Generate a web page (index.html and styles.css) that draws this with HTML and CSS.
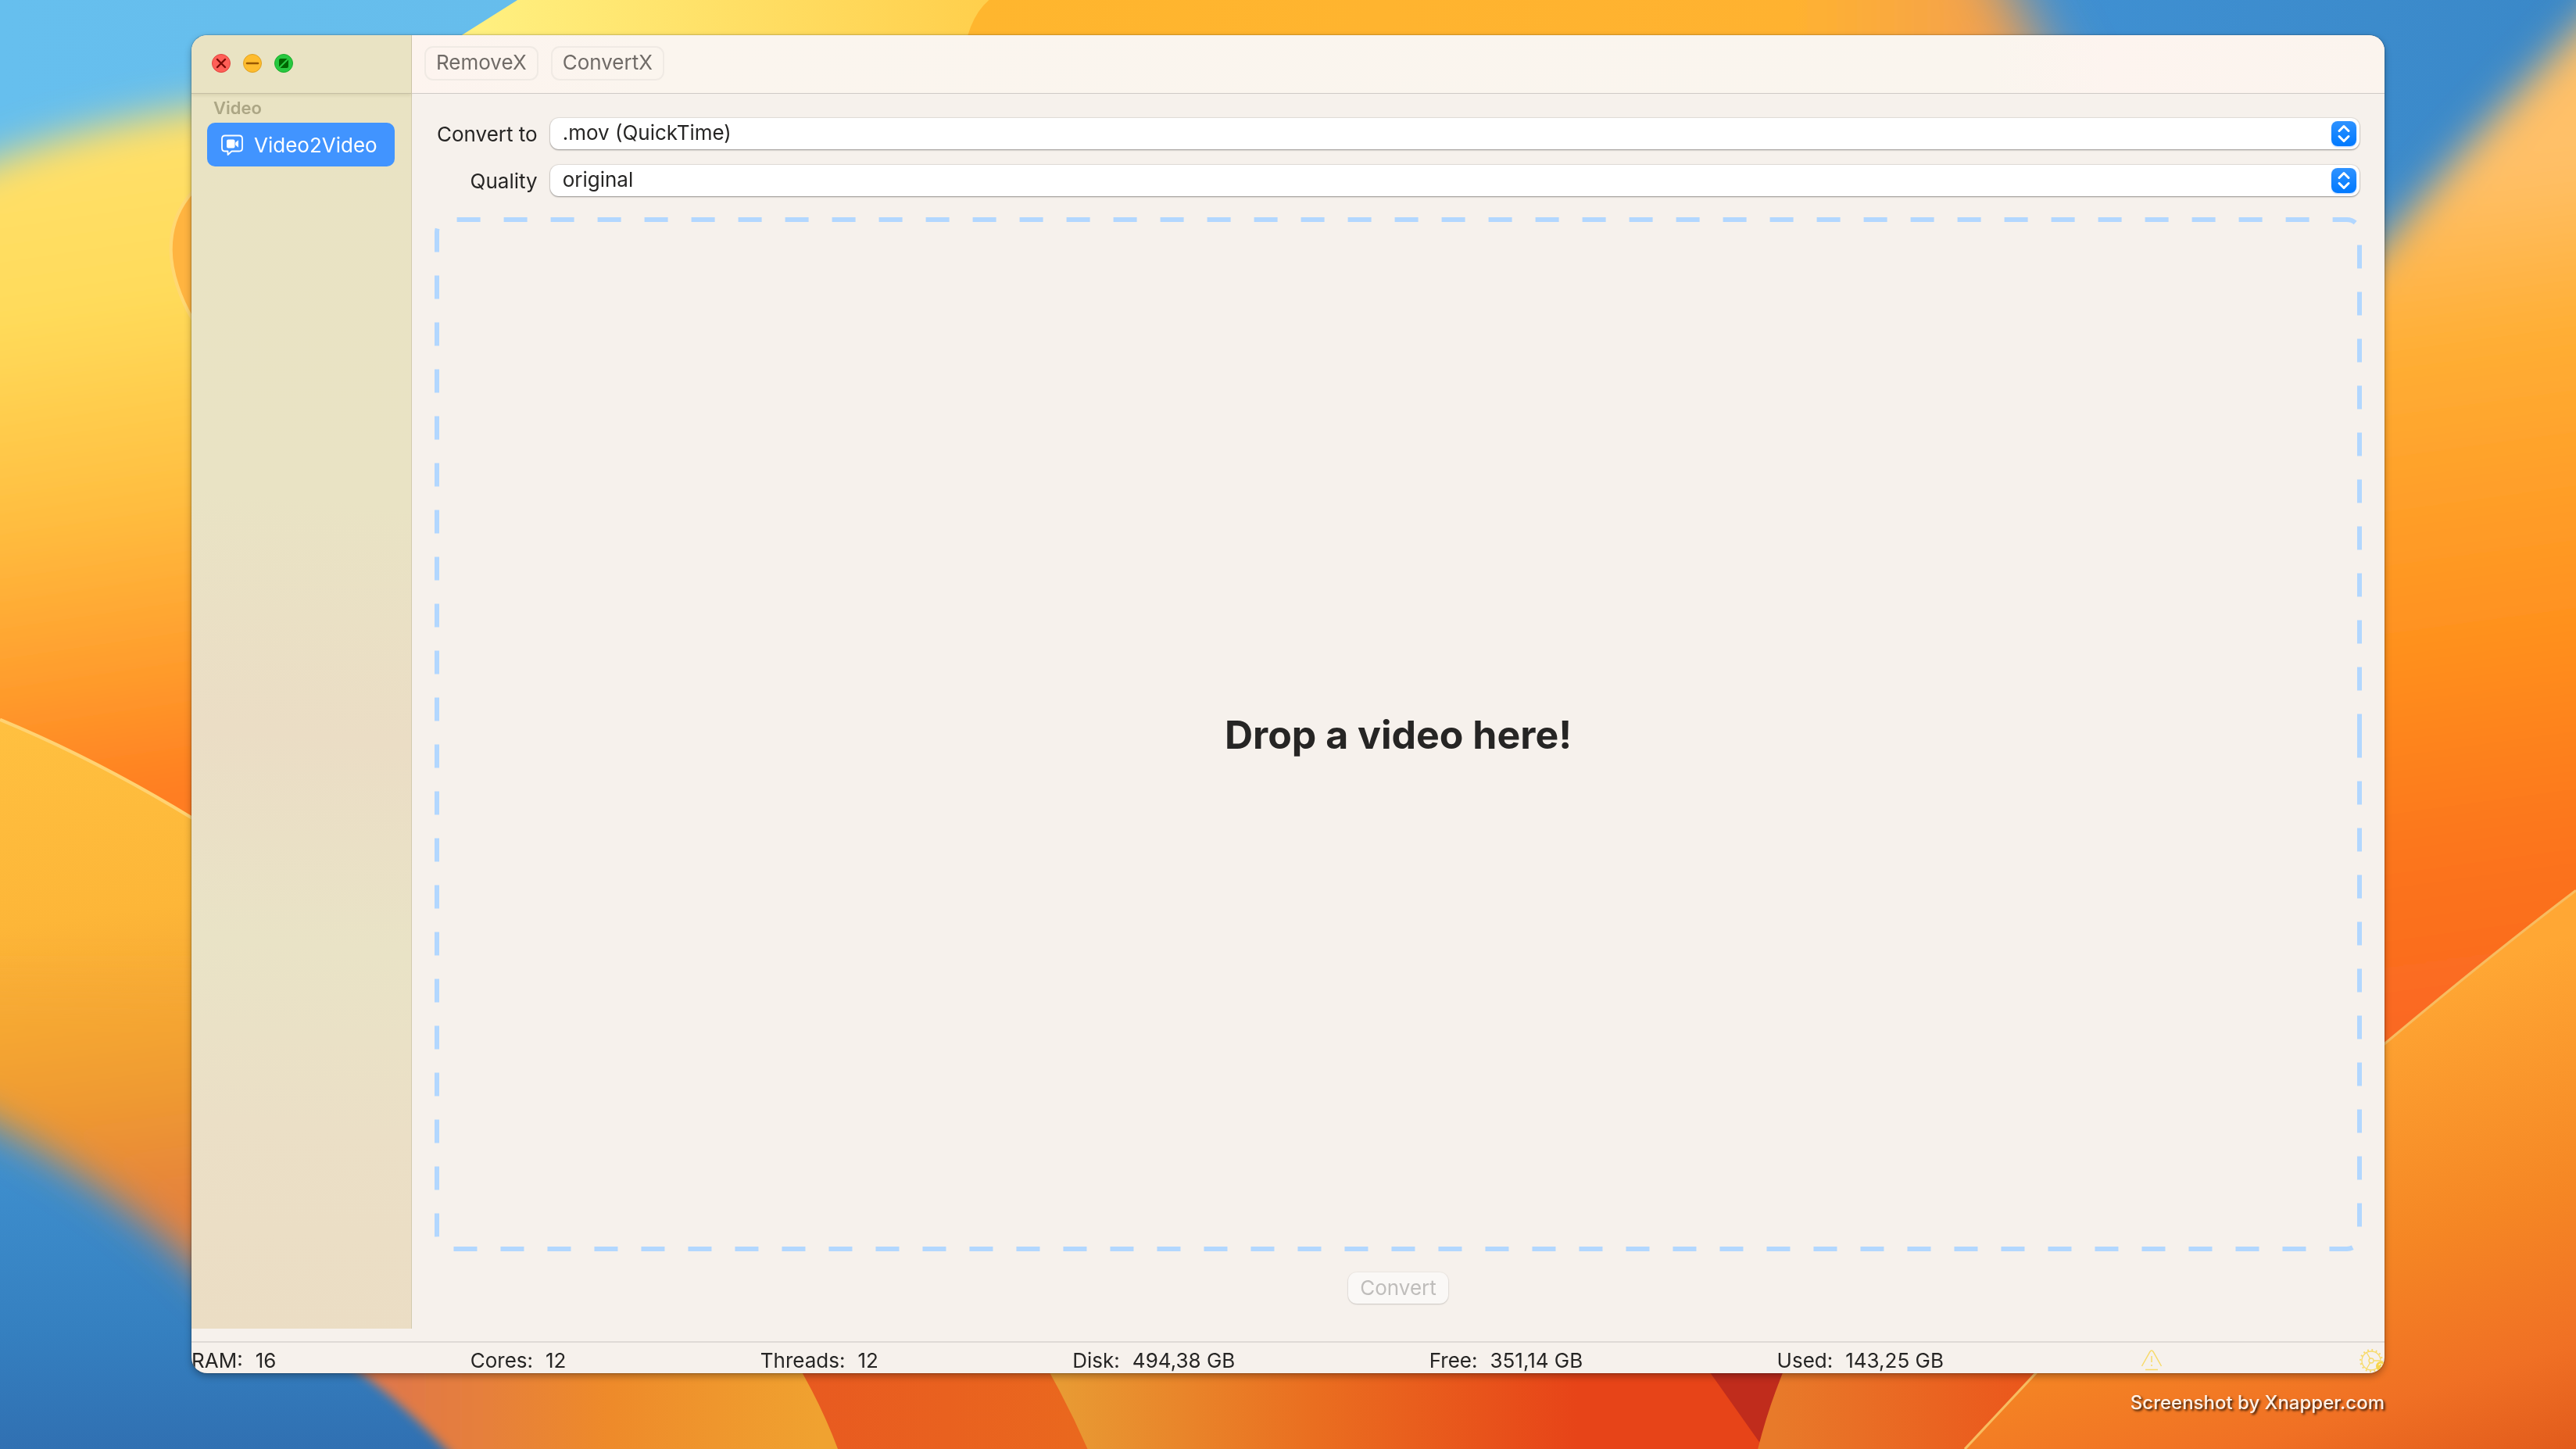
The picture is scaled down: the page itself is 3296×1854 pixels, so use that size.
FILE: index.html
```html
<!DOCTYPE html>
<html lang="en">
<head>
<meta charset="utf-8">
<meta name="viewport" content="width=device-width, initial-scale=1">
<title>Video2Video</title>
<link rel="stylesheet" href="styles.css">
</head>
<body>
<svg class="wallpaper" viewBox="0 0 1568 882" preserveAspectRatio="xMidYMid slice" aria-hidden="true">
  <defs>
    <filter id="soft" x="-20%" y="-20%" width="140%" height="140%"><feGaussianBlur stdDeviation="12"/></filter>
    <filter id="softer" x="-20%" y="-40%" width="140%" height="180%"><feGaussianBlur stdDeviation="18"/></filter>
    <filter id="edge" x="-20%" y="-20%" width="140%" height="140%"><feGaussianBlur stdDeviation="3"/></filter>
    <linearGradient id="sky" x1="0" y1="0" x2="1" y2="0"><stop offset="0" stop-color="#66bfee"/><stop offset=".2" stop-color="#66bdec"/><stop offset=".8" stop-color="#3f90d2"/><stop offset="1" stop-color="#3a88c8"/></linearGradient>
    <linearGradient id="yellow" gradientUnits="userSpaceOnUse" x1="20" y1="90" x2="80" y2="490"><stop offset="0" stop-color="#ffe06a"/><stop offset=".25" stop-color="#ffdb5a"/><stop offset=".55" stop-color="#ffbe40"/><stop offset=".8" stop-color="#ff9c2c"/><stop offset="1" stop-color="#ff7c20"/></linearGradient>
    <linearGradient id="amber" gradientUnits="userSpaceOnUse" x1="20" y1="440" x2="60" y2="740"><stop offset="0" stop-color="#ffc040"/><stop offset=".4" stop-color="#fdb638"/><stop offset=".75" stop-color="#f09c30"/><stop offset="1" stop-color="#e5823c"/></linearGradient>
    <linearGradient id="deep" gradientUnits="userSpaceOnUse" x1="0" y1="700" x2="0" y2="882"><stop offset="0" stop-color="#3f90cf"/><stop offset=".6" stop-color="#3580c0"/><stop offset="1" stop-color="#3070b2"/></linearGradient>
    <linearGradient id="top" gradientUnits="userSpaceOnUse" x1="290" y1="0" x2="600" y2="0"><stop offset="0" stop-color="#fff080"/><stop offset="1" stop-color="#ffcf4c"/></linearGradient>
    <linearGradient id="topRight" gradientUnits="userSpaceOnUse" x1="590" y1="0" x2="1260" y2="0"><stop offset="0" stop-color="#ffb62e"/><stop offset=".75" stop-color="#ffb230"/><stop offset="1" stop-color="#f09a58"/></linearGradient>
    <linearGradient id="right" gradientUnits="userSpaceOnUse" x1="1470" y1="110" x2="1540" y2="620"><stop offset="0" stop-color="#ffc068"/><stop offset=".2" stop-color="#ffae34"/><stop offset=".55" stop-color="#ff901e"/><stop offset=".8" stop-color="#fc741c"/><stop offset="1" stop-color="#fa6822"/></linearGradient>
    <linearGradient id="rightLow" gradientUnits="userSpaceOnUse" x1="1470" y1="600" x2="1560" y2="882"><stop offset="0" stop-color="#ffa734"/><stop offset=".5" stop-color="#f58624"/><stop offset=".8" stop-color="#f07024"/><stop offset="1" stop-color="#e25c1c"/></linearGradient>
    <linearGradient id="b1" gradientUnits="userSpaceOnUse" x1="240" y1="0" x2="500" y2="0"><stop offset="0" stop-color="#e07848"/><stop offset=".5" stop-color="#ee8a2a"/><stop offset="1" stop-color="#f0a230"/></linearGradient>
    <linearGradient id="b2" gradientUnits="userSpaceOnUse" x1="490" y1="0" x2="660" y2="0"><stop offset="0" stop-color="#e85a20"/><stop offset="1" stop-color="#ea681e"/></linearGradient>
    <linearGradient id="b3" gradientUnits="userSpaceOnUse" x1="640" y1="0" x2="960" y2="0"><stop offset="0" stop-color="#e89c34"/><stop offset=".5" stop-color="#ea6e20"/><stop offset="1" stop-color="#e74418"/></linearGradient>
    <linearGradient id="b4" gradientUnits="userSpaceOnUse" x1="1080" y1="0" x2="1230" y2="0"><stop offset="0" stop-color="#e87a2a"/><stop offset="1" stop-color="#eb581c"/></linearGradient>
  </defs>
  <rect width="1568" height="882" fill="url(#sky)"/>
  <path d="M-60 126Q20 76 160 60L360 300 360 640-60 640Z" fill="url(#yellow)" filter="url(#soft)"/>
  <path d="M315 0H1000V60H220Z" fill="url(#top)"/>
  <path d="M700-80V80H1268L1186-80Z" fill="url(#topRight)" filter="url(#softer)"/>
  <path d="M602 0Q588 12 586 40H1100V0Z" fill="url(#topRight)"/>
  <path d="M117 117C108 127 104 138 104 152C104 166 110 182 117 194H200V117Z" fill="#ffb440" stroke="#ffd873" stroke-width="2"/>
  <rect y="600" width="300" height="300" fill="url(#deep)"/>
  <path d="M0 438Q58 462 117 498L160 525V730L0 650Z" fill="url(#amber)"/>
  <path d="M-40 600V666Q60 712 130 782L220 870H300V600Z" fill="url(#amber)" filter="url(#soft)"/>
  <path d="M0 438Q58 462 117 498" fill="none" stroke="#ffd272" stroke-width="2"/>
  <rect y="834" width="320" height="50" fill="url(#deep)"/>
  <path d="M196 820Q240 846 288 900H520L484 820Z" fill="url(#b1)" filter="url(#edge)"/>
  <path d="M300 820H480Q500 850 510 882H300Z" fill="url(#b1)"/>
  <path d="M479 820Q498 850 510 882H680V820Z" fill="url(#b2)"/>
  <path d="M630 820Q648 850 662 882H1100V820Z" fill="url(#b3)"/>
  <path d="M1030 820L1071 878 1092 820Z" fill="#c02c1c"/>
  <path d="M1092 820Q1078 850 1070 882H1260V820Z" fill="url(#b4)"/>
  <path d="M1440 162Q1500 86 1610-24V900H1400V190Z" fill="url(#right)" filter="url(#soft)"/>
  <path d="M1254 820Q1224 852 1196 882H1568V542Q1510 586 1440 645Z" fill="url(#rightLow)"/>
  <path d="M1568 542Q1510 586 1440 645M1254 820Q1224 852 1196 882" fill="none" stroke="#f8bc60" stroke-width="1.5"/>
</svg>

<div class="window">
  <div class="panes">
    <aside class="sidebar">
      <div class="titlebar">
        <button class="light" type="button" aria-label="Close"><svg viewBox="0 0 24 24"><circle cx="12" cy="12" r="11.5" fill="#ff5f57" stroke="#e0443e"/><path d="M7 7l10 10M17 7L7 17" stroke="#7b0a05" stroke-width="2.4" stroke-linecap="round"/></svg></button>
        <button class="light" type="button" aria-label="Minimize"><svg viewBox="0 0 24 24"><circle cx="12" cy="12" r="11.5" fill="#febc2e" stroke="#dea123"/><path d="M5 12h14" stroke="#985700" stroke-width="2.6" stroke-linecap="round"/></svg></button>
        <button class="light" type="button" aria-label="Zoom"><svg viewBox="0 0 24 24"><circle cx="12" cy="12" r="11.5" fill="#28c840" stroke="#1dad2b"/><path d="M6 16.500V8q0-2 2-2h8.500zM18 7.500V16q0 2-2 2H7.500z" fill="#006500"/></svg></button>
      </div>
      <nav class="nav" aria-labelledby="nav-title">
        <h2 class="nav-title" id="nav-title">Video</h2>
        <a class="nav-item" href="#video2video" aria-current="page">
          <svg class="nav-icon" viewBox="0 0 28 28"><path d="M5 1.500H23Q27 1.500 27 5.500V17.500Q27 21.500 23 21.500H13.500L8.500 26V21.500H5Q1 21.500 1 17.500V5.500Q1 1.500 5 1.500Z" fill="none" stroke="#fff" stroke-width="1.800" stroke-linejoin="round"/><rect x="7" y="6.500" width="10.500" height="11" rx="2" fill="#fff"/><path d="M18.500 10.500L21.700 7.800V16.200L18.500 13.500Z" fill="#fff" stroke="#fff" stroke-width=".6" stroke-linejoin="round"/></svg>
          Video2Video
        </a>
      </nav>
    </aside>
    <main class="main">
      <header class="toolbar">
        <button class="tool" type="button">RemoveX</button>
        <button class="tool" type="button">ConvertX</button>
      </header>
      <form class="converter">
        <div class="fields">
          <label for="format">Convert to</label>
          <div class="picker">
            <select id="format"><option>.mov (QuickTime)</option></select>
            <svg class="stepper" viewBox="0 0 32 32" aria-hidden="true"><path d="M10 12.500l6-6 6 6M10 19.500l6 6 6-6"/></svg>
          </div>
          <label for="quality">Quality</label>
          <div class="picker">
            <select id="quality"><option>original</option></select>
            <svg class="stepper" viewBox="0 0 32 32" aria-hidden="true"><path d="M10 12.500l6-6 6 6M10 19.500l6 6 6-6"/></svg>
          </div>
        </div>
        <div class="dropzone">
          <svg class="outline" aria-hidden="true"><path/></svg>
          <p class="prompt">Drop a video here!</p>
        </div>
        <button class="convert" type="submit" disabled>Convert</button>
      </form>
    </main>
  </div>
  <footer class="status">
    <dl class="stats">
      <div><dt>RAM:</dt><dd>16</dd></div>
      <div><dt>Cores:</dt><dd>12</dd></div>
      <div><dt>Threads:</dt><dd>12</dd></div>
      <div><dt>Disk:</dt><dd>494,38 GB</dd></div>
      <div><dt>Free:</dt><dd>351,14 GB</dd></div>
      <div><dt>Used:</dt><dd>143,25 GB</dd></div>
    </dl>
    <svg class="warning" viewBox="0 0 32 32" role="img" aria-label="Warning"><path d="M3.500 23L14 4.500Q16 1.500 18 4.500L28.500 23M16 10v8M16 21v2M8 27.500h16" fill="none" stroke="#f7da6a" stroke-width="1.500"/></svg>
    <svg class="gear" viewBox="0 0 32 32" role="img" aria-label="Settings help">
      <circle cx="15" cy="16" r="13.700" fill="none" stroke="#f7da6a" stroke-width="2.400" stroke-dasharray="1.800 3.580"/>
      <circle cx="15" cy="16" r="12" fill="none" stroke="#f7da6a" stroke-width="1.300"/>
      <path d="M13.500 13.200L9 5.500M13.500 18.800L9 26.500M18.200 16H27" stroke="#f7da6a" stroke-width="1.300"/>
      <circle cx="15" cy="16" r="3" fill="none" stroke="#f7da6a" stroke-width="1.300"/>
      <circle cx="27" cy="23" r="6" fill="#f7d54c"/>
      <path d="M25 22q0-2 2-2t2 1.800q0 1-2 2.200M27 25.500v1" fill="none" stroke="#f6f1ec" stroke-width="1.200"/>
    </svg>
  </footer>
</div>
<p class="credit">Screenshot by Xnapper.com</p>
<script src="outline.js"></script>
</body>
</html>
```
FILE: outline.js
```js
// The dash pattern starts half-way down the right side and runs clockwise.
const zone = document.querySelector('.dropzone');
const path = zone.querySelector('path');
const inset = 3;
const r = 16;

function drawOutline() {
  const right = zone.clientWidth - inset;
  const bottom = zone.clientHeight - inset;
  const middle = zone.clientHeight / 2;
  path.setAttribute('d',
    `M${right} ${middle}V${bottom - r}A${r} ${r} 0 0 1 ${right - r} ${bottom}` +
    `H${inset + r}A${r} ${r} 0 0 1 ${inset} ${bottom - r}` +
    `V${inset + r}A${r} ${r} 0 0 1 ${inset + r} ${inset}` +
    `H${right - r}A${r} ${r} 0 0 1 ${right} ${inset + r}V${middle}`);
}

drawOutline();
new ResizeObserver(drawOutline).observe(zone);
```
FILE: styles.css
```css
* {
  box-sizing: border-box;
}

body {
  display: flex;
  flex-direction: column;
  min-height: 100vh;
  margin: 0;
  padding: 45px 245px 0;
  color: #262524;
  font: 26px/32px Inter, "Liberation Sans", sans-serif;
}

button,
select {
  color: inherit;
  font: inherit;
}

h2,
p,
dl,
dd {
  margin: 0;
}

.wallpaper {
  position: fixed;
  inset: 0;
  z-index: -1;
  width: 100%;
  height: 100%;
}

.window {
  display: flex;
  flex: 1;
  flex-direction: column;
  overflow: hidden;
  border-radius: 20px;
  background: #f6f1ec;
  box-shadow: 0 0 2px rgba(0, 0, 0, .5), 0 4px 10px rgba(0, 0, 0, .3);
}

.panes {
  display: flex;
  flex: 1;
}

.sidebar {
  flex: none;
  width: 282px;
  margin-bottom: 16px;
  border-right: 1px solid #d3cbae;
  background: linear-gradient(185deg, #e9e3c3 0%, #e9e3c4 36%, #ebddc5 54%, #e9e3c6 70%, #ebdfc6 84%, #ebddc4 100%);
}

.titlebar {
  display: flex;
  align-items: center;
  gap: 16px;
  height: 75px;
  padding: 0 26px 2px;
  border-bottom: 1px solid #c5bfa4;
  box-shadow: 0 2px 4px rgba(90, 80, 40, .12);
}

.light {
  width: 24px;
  height: 24px;
  padding: 0;
  border: 0;
  background: none;
}

.light svg {
  display: block;
}

.nav {
  padding: 4px 21px 4px 20px;
}

.nav-title {
  padding: 0 8px;
  color: #aca685;
  font-size: 22px;
  font-weight: 600;
  line-height: 28px;
}

.nav-item {
  display: flex;
  align-items: center;
  gap: 14px;
  height: 56px;
  margin-top: 5px;
  padding: 2px 18px 0;
  border-radius: 10px;
  background: #4194ff;
  color: #fff;
  text-decoration: none;
}

.nav-icon {
  flex: none;
  width: 28px;
  height: 28px;
}

.main {
  display: flex;
  flex: 1;
  flex-direction: column;
}

.toolbar {
  display: flex;
  align-items: flex-start;
  gap: 16px;
  height: 75px;
  padding: 14px 16px 0;
  border-bottom: 1px solid #cfcac6;
  background: linear-gradient(90deg, #fdf4ef, #fbf5ee 12%, #faf5ee 80%, #fdf4ef 86%, #fbf4ee);
}

.tool {
  height: 44px;
  padding: 0 13px 2px;
  border: 2px solid #f0eae4;
  border-radius: 11px;
  background: none;
  color: #706b67;
}

.converter {
  display: flex;
  flex: 1;
  flex-direction: column;
  align-items: center;
  gap: 27px;
  padding: 31px 29px 48px;
}

.fields {
  display: grid;
  grid-template-columns: auto 1fr;
  align-self: stretch;
  align-items: center;
  gap: 20px 16px;
  padding: 0 3px;
}

.fields label {
  padding-top: 2px;
  text-align: right;
}

.picker {
  display: flex;
  position: relative;
}

.picker select {
  flex: 1;
  height: 40px;
  padding: 0 16px 2px;
  border: 0;
  border-radius: 11px;
  appearance: none;
  background: #fff;
  box-shadow: 0 0 1px 1px rgba(0, 0, 0, .08), 0 1px 2px rgba(0, 0, 0, .35);
}

.stepper {
  position: absolute;
  top: 4px;
  right: 4px;
  width: 32px;
  height: 32px;
  border-radius: 8px;
  background: linear-gradient(#2e92ff, #0079ff);
  box-shadow: 0 1px 2px rgba(0, 100, 255, .3);
  pointer-events: none;
}

.stepper path {
  fill: none;
  stroke: #fff;
  stroke-width: 3;
  stroke-linecap: round;
  stroke-linejoin: round;
}

.dropzone {
  display: flex;
  position: relative;
  flex: 1;
  align-items: center;
  align-self: stretch;
  justify-content: center;
}

.outline {
  position: absolute;
  inset: 0;
  width: 100%;
  height: 100%;
}

.outline path {
  fill: none;
  stroke: #b2d7ff;
  stroke-width: 6;
  stroke-dasharray: 30 30;
}

.prompt {
  font-size: 50px;
  font-weight: 700;
  line-height: 64px;
}

.convert {
  height: 40px;
  padding: 0 15px;
  border: 0;
  border-radius: 11px;
  background: #faf8f6;
  box-shadow: 0 0 1px 1px rgba(0, 0, 0, .04), 0 1px 2px rgba(0, 0, 0, .15);
  color: #bfbdbb;
}

.status {
  display: flex;
  align-items: center;
  gap: 250px;
  height: 41px;
  padding-top: 6px;
  border-top: 2px solid #dfdad6;
}

.stats {
  display: flex;
  flex: 1;
  justify-content: space-between;
}

.stats div {
  display: flex;
  gap: 16px;
}

.warning,
.gear {
  width: 32px;
  height: 32px;
}

.credit {
  height: 97px;
  color: #fff0e4;
  font-size: 24px;
  font-weight: 500;
  line-height: 76px;
  text-align: right;
  text-shadow: 2px 2px 3px rgba(0, 0, 0, .8);
}
```
